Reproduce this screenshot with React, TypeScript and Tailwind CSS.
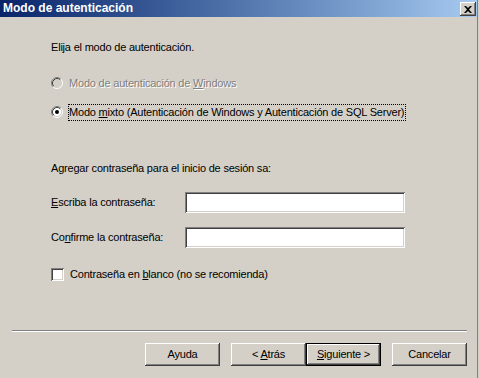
import React from "react";

function Radio({ checked, disabled }: { checked?: boolean; disabled?: boolean }) {
  return (
    <svg width="12" height="12" viewBox="0 0 12 12" className="shrink-0">
      <circle cx="6" cy="6" r="4.2" fill={disabled ? "#d4d0c8" : "#ffffff"} />
      <path d="M2.11 9.89A5.5 5.5 0 0 1 9.89 2.11" stroke="#808080" fill="none" />
      <path d="M9.89 2.11A5.5 5.5 0 0 1 2.11 9.89" stroke="#ffffff" fill="none" />
      <path d="M2.82 9.18A4.5 4.5 0 0 1 9.18 2.82" stroke="#404040" fill="none" />
      <path d="M9.18 2.82A4.5 4.5 0 0 1 2.82 9.18" stroke="#d4d0c8" fill="none" />
      {checked && <circle cx="6" cy="6" r="2" fill="#000000" />}
    </svg>
  );
}

function Btn({ children, def }: { children: React.ReactNode; def?: boolean }) {
  return (
    <div
      className={
        def
          ? "w-[75px] h-[23px] flex items-center justify-center border border-black shadow-[inset_-1px_-1px_#404040,inset_1px_1px_#ffffff,inset_-2px_-2px_#808080,inset_2px_2px_#d4d0c8]"
          : "w-[75px] h-[23px] flex items-center justify-center shadow-[inset_-1px_-1px_#404040,inset_1px_1px_#ffffff,inset_-2px_-2px_#808080,inset_2px_2px_#d4d0c8]"
      }
    >
      <span className="leading-[13px]">{children}</span>
    </div>
  );
}

function Field() {
  return (
    <div className="w-[220px] h-[21px] bg-white shadow-[inset_1px_1px_#808080,inset_-1px_-1px_#ffffff,inset_2px_2px_#404040,inset_-2px_-2px_#d4d0c8]" />
  );
}

export default function App() {
  return (
    <div className="w-[479px] h-[378px] bg-[#d4d0c8] font-['Liberation_Sans',Arial,sans-serif] text-[11px] tracking-[-0.2px] text-black">
      <div className="w-[478px] h-[378px] border-r border-[#808080] flex flex-col">
        {/* Title bar */}
        <div className="h-[17px] flex items-start justify-between bg-gradient-to-r from-[#0a246a] to-[#a6caf0]">
          <span className="pl-[3px] pt-[1px] leading-[15px] text-[12px] font-bold tracking-normal text-white">
            Modo de autenticación
          </span>
          <div className="mt-[2px] mr-[1px] w-[16px] h-[14px] bg-[#d4d0c8] flex items-center justify-center shadow-[inset_-1px_-1px_#404040,inset_1px_1px_#ffffff,inset_-2px_-2px_#808080,inset_2px_2px_#d4d0c8]">
            <svg width="8" height="7" viewBox="0 0 8 7">
              <path d="M0 0h2l2 2 2-2h2L5 3.5 8 7H6L4 5 2 7H0l3-3.5z" fill="#000" />
            </svg>
          </div>
        </div>

        {/* Body */}
        <div className="flex flex-col pl-[51px]">
          <div className="mt-[24px] h-[13px] leading-[13px]">Elija el modo de autenticación.</div>

          <div className="mt-[20px] h-[18px] flex items-center">
            <Radio disabled />
            <span className="ml-[5px] border border-transparent leading-[14px] text-[#808080] [text-shadow:1px_1px_0_#ffffff]">
              Modo de autenticación de <u className="underline-offset-[1px]">W</u>indows
            </span>
          </div>

          <div className="mt-[11px] h-[18px] flex items-center">
            <Radio checked />
            <span className="ml-[5px] border border-dotted border-black pr-[1px] leading-[15px]">
              Modo <u className="underline-offset-[1px]">m</u>ixto (Autenticación de Windows y Autenticación de SQL Server)
            </span>
          </div>

          <div className="mt-[41px] h-[13px] leading-[13px]">Agregar contraseña para el inicio de sesión sa:</div>

          <div className="mt-[17px] h-[21px] flex items-center">
            <span className="w-[134px] leading-[13px]">
              <u className="underline-offset-[1px]">E</u>scriba la contraseña:
            </span>
            <Field />
          </div>

          <div className="mt-[14px] h-[21px] flex items-center">
            <span className="w-[134px] leading-[13px]">
              Co<u className="underline-offset-[1px]">n</u>firme la contraseña:
            </span>
            <Field />
          </div>

          <div className="mt-[20px] h-[13px] flex items-center">
            <div className="w-[13px] h-[13px] bg-white shadow-[inset_1px_1px_#808080,inset_-1px_-1px_#ffffff,inset_2px_2px_#404040,inset_-2px_-2px_#d4d0c8]" />
            <span className="ml-[6px] leading-[13px]">
              Contraseña en <u className="underline-offset-[1px]">b</u>lanco (no se recomienda)
            </span>
          </div>
        </div>

        {/* Separator */}
        <div className="mt-[49px] ml-[12px] w-[455px] h-[2px] border-t border-t-[#808080] border-b border-b-white" />

        {/* Buttons */}
        <div className="mt-[11px] ml-[145px] flex">
          <Btn>Ayuda</Btn>
          <div className="ml-[11px] flex">
            <Btn>
              &lt; <u className="underline-offset-[1px]">A</u>trás
            </Btn>
            <Btn def>
              <u className="underline-offset-[1px]">S</u>iguiente &gt;
            </Btn>
          </div>
          <div className="ml-[11px]">
            <Btn>Cancelar</Btn>
          </div>
        </div>
      </div>
    </div>
  );
}
